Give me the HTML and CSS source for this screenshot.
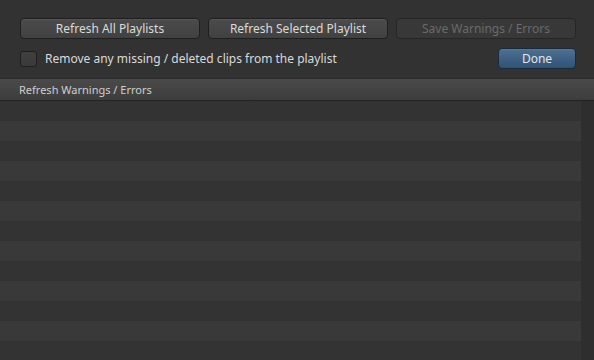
FILE: index.html
```html
<!DOCTYPE html>
<html lang="en">
<head>
  <meta charset="UTF-8" />
  <title>Refresh Playlists</title>
  <link rel="stylesheet" href="styles.css">
</head>
<body>

  <div class="toolbar">
    <div class="button-row">
      <button class="btn">Refresh All Playlists</button>
      <button class="btn">Refresh Selected Playlist</button>
      <button class="btn" disabled>Save Warnings / Errors</button>
    </div>
    <div class="option-row">
      <label class="check">
        <span class="box"></span>
        Remove any missing / deleted clips from the playlist
      </label>
      <button class="btn done">Done</button>
    </div>
  </div>

  <div class="list-header">Refresh Warnings / Errors</div>

  <div class="list">
    <div class="rows"></div>
    <div class="scrollbar"></div>
  </div>

</body>
</html>
```

FILE: styles.css
```css
:root {
  --bg-color: #323232;
  --text-color: #dadada;
  --btn-top: #4b4b4b;
  --btn-bottom: #414141;
  --btn-border: #1f1f1f;
  --row-dark: #333333;
  --row-light: #393939;
}

html, body {
  height: 100%;
}

body {
  margin: 0;
  background-color: var(--bg-color);
  color: var(--text-color);
  font-family: "Noto Sans", "Liberation Sans", sans-serif;
  font-size: 12px;
  display: flex;
  flex-direction: column;
  overflow: hidden;
}

.toolbar {
  padding: 18px 18px 0 20px;
  height: 60px;
}

.button-row {
  display: flex;
  gap: 8px;
}

.btn {
  width: 180px;
  height: 21px;
  padding: 0;
  border: 1px solid var(--btn-border);
  border-radius: 4px;
  background: linear-gradient(var(--btn-top), var(--btn-bottom));
  color: var(--text-color);
  font-family: inherit;
  font-size: 12px;
  line-height: 19px;
  box-shadow: inset 0 1px 0 rgba(255,255,255,0.06);
}

.btn:disabled {
  background: #383838;
  border-color: #262626;
  color: #6a6a6a;
  box-shadow: none;
}

.option-row {
  display: flex;
  align-items: center;
  justify-content: space-between;
  margin-top: 9px;
}

.check {
  display: flex;
  align-items: center;
  gap: 8px;
}

.box {
  width: 15px;
  height: 14px;
  border: 1px solid #1f1f1f;
  border-radius: 3px;
  background: linear-gradient(#404040, #3a3a3a);
}

.done {
  width: 78px;
  border-color: #1a2a3a;
  background: linear-gradient(#4d7093, #2f5276);
  color: #e6e6e6;
}

.list-header {
  height: 21px;
  line-height: 21px;
  padding-left: 19px;
  font-size: 11px;
  color: #cfcfcf;
  background: linear-gradient(#4a4a4a, #3d3d3d);
  border-top: 1px solid #2a2a2a;
  border-bottom: 1px solid #222222;
}

.list {
  flex: 1;
  display: flex;
}

.rows {
  flex: 1;
  background: repeating-linear-gradient(
    var(--row-dark) 0, var(--row-dark) 20px,
    var(--row-light) 20px, var(--row-light) 40px
  );
}

.scrollbar {
  width: 13px;
  background-color: #2e2e2e;
}
```
